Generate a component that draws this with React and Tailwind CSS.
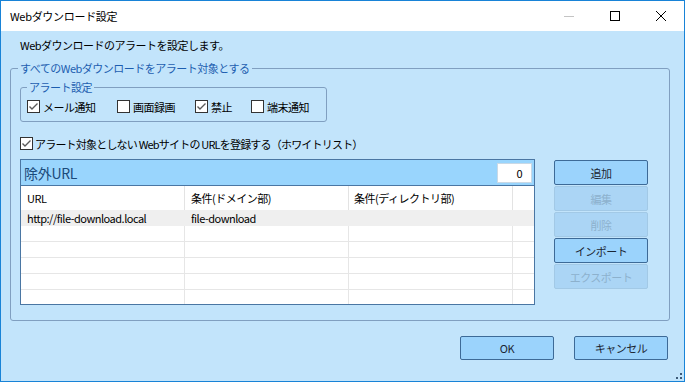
import React from "react";

function Check({ checked }) {
  return (
    <span className="w-[13px] h-[13px] border border-[#333333] bg-white flex items-center justify-center shrink-0">
      {checked && (
        <svg width="11" height="11" viewBox="0 0 11 11">
          <path d="M1.5 5.5 L4 8 L9.5 2.5" fill="none" stroke="#5a5a5a" strokeWidth="1.4" />
        </svg>
      )}
    </span>
  );
}

function CB({ checked, label, w }) {
  return (
    <div className={`flex items-center h-[13px] ${w}`}>
      <Check checked={checked} />
      <span className="ml-[3px] leading-[14px]">{label}</span>
    </div>
  );
}

function Btn({ children, disabled, cls }) {
  return (
    <div
      className={`w-[94px] flex items-center justify-center rounded-[2px] border text-[11px] leading-[14px] ${cls} ${
        disabled
          ? "bg-[#abd5f5] border-[#a2c9e6] text-[#8db1cd]"
          : "bg-[#9bd3fc] border-[#3d6a97] text-[#1b2633]"
      }`}
    >
      {children}
    </div>
  );
}

const rows = [
  ["http://file-download.local", "file-download", ""],
  ["", "", ""],
  ["", "", ""],
  ["", "", ""],
  ["", "", ""],
  ["", "", ""],
];

export default function App() {
  return (
    <div className="w-[685px] h-[382px] border border-[#1883d7] flex flex-col bg-[#c2e4fb] font-['Noto_Sans_CJK_JP',sans-serif] text-[11px] tracking-[-0.5px] text-black overflow-hidden relative">
      {/* title bar */}
      <div className="h-[30px] bg-white flex items-center shrink-0">
        <span className="pl-[9px] text-[11px] leading-[16px] tracking-[-0.3px] text-black">Webダウンロード設定</span>
        <div className="ml-auto flex h-full">
          <div className="w-[46px] h-full flex items-center justify-center">
            <div className="w-[10px] h-px bg-[#c4c4c4]" />
          </div>
          <div className="w-[46px] h-full flex items-center justify-center">
            <div className="w-[10px] h-[10px] border border-black" />
          </div>
          <div className="w-[46px] h-full flex items-center justify-center">
            <svg width="10" height="10" viewBox="0 0 10 10">
              <path d="M0 0 L10 10 M10 0 L0 10" stroke="#000" strokeWidth="1" />
            </svg>
          </div>
        </div>
      </div>

      {/* content */}
      <div className="flex-1 flex flex-col">
        <div className="pt-[7px] pl-[19px] leading-[14px]">Webダウンロードのアラートを設定します。</div>

        <fieldset className="mt-[9px] ml-[9px] w-[660px] border border-[#809fc0] rounded-[3px] pl-[7px] pb-[15px]">
          <legend className="px-[2px] leading-[14px] text-[#1d5eb0]">すべてのWebダウンロードをアラート対象とする</legend>
          <div className="pl-[2px]">
            <fieldset className="mt-[5px] w-[307px] border border-[#809fc0] rounded-[3px] pl-[6px] pb-[8px]">
              <legend className="px-[2px] leading-[14px] text-[#1d5eb0]">アラート設定</legend>
              <div className="mt-[6px] flex">
                <CB checked label="メール通知" w="w-[90px]" />
                <CB label="画面録画" w="w-[78px]" />
                <CB checked label="禁止" w="w-[56px]" />
                <CB label="端末通知" w="" />
              </div>
            </fieldset>

            <div className="mt-[15px] flex items-center h-[13px]">
              <Check checked />
              <span className="ml-[2px] leading-[14px] tracking-[-0.8px]">アラート対象としない Webサイトの URLを登録する（ホワイトリスト）</span>
            </div>

            <div className="mt-[9px] flex">
              <div className="w-[515px] h-[146px] border border-[#4a76a3] flex flex-col overflow-hidden">
                <div className="h-[26px] bg-[#99d5fd] border-b border-[#4a76a3] flex items-center shrink-0">
                  <span className="pl-[3px] text-[14px] leading-[18px] tracking-[-0.3px] text-[#1b4a7a]">除外URL</span>
                  <div className="ml-auto mr-[2px] w-[35px] h-[20px] bg-white border border-[#c9d9e6] flex items-center justify-end pr-[9px] text-[11px] leading-[14px]">
                    0
                  </div>
                </div>
                <div className="flex-1 bg-white flex flex-col">
                  <div className="h-[24px] flex shrink-0">
                    <div className="w-[164px] border-r border-[#e3e3e3] flex items-center pl-[6px]">URL</div>
                    <div className="w-[164px] border-r border-[#e3e3e3] flex items-center pl-[6px]">条件(ドメイン部)</div>
                    <div className="w-[164px] border-r border-[#e3e3e3] flex items-center pl-[5px]">条件(ディレクトリ部)</div>
                    <div className="flex-1" />
                  </div>
                  {rows.map((r, i) => (
                    <div
                      key={i}
                      className={`h-[16px] flex shrink-0 border-b ${i === 0 ? "bg-[#efefef] border-[#efefef]" : "border-[#e6e6e6]"}`}
                    >
                      <div className={`w-[164px] border-r ${i === 0 ? "border-[#efefef]" : "border-[#e6e6e6]"} flex items-center pl-[6px] leading-[14px]`}>{r[0]}</div>
                      <div className={`w-[164px] border-r ${i === 0 ? "border-[#efefef]" : "border-[#e6e6e6]"} flex items-center pl-[6px] leading-[14px]`}>{r[1]}</div>
                      <div className={`w-[164px] border-r ${i === 0 ? "border-[#efefef]" : "border-[#e6e6e6]"} flex items-center pl-[5px] leading-[14px]`}>{r[2]}</div>
                      <div className="flex-1" />
                    </div>
                  ))}
                </div>
              </div>
              <div className="ml-[19px] mt-[1px] flex flex-col gap-[1px]">
                <Btn cls="h-[25px]">追加</Btn>
                <Btn cls="h-[25px]" disabled>編集</Btn>
                <Btn cls="h-[25px]" disabled>削除</Btn>
                <Btn cls="h-[25px]">インポート</Btn>
                <Btn cls="h-[25px]" disabled>エクスポート</Btn>
              </div>
            </div>
          </div>
        </fieldset>

        <div className="mt-[15px] flex justify-end pr-[16px] gap-[20px]">
          <Btn cls="h-[24px]">OK</Btn>
          <Btn cls="h-[24px]">キャンセル</Btn>
        </div>
      </div>

      {/* resize grip */}
      <svg className="absolute right-[1px] bottom-[1px]" width="8" height="8" viewBox="0 0 8 8">
        <rect x="5" y="1" width="2" height="2" fill="#3d5a78" />
        <rect x="1" y="5" width="2" height="2" fill="#3d5a78" />
        <rect x="5" y="5" width="2" height="2" fill="#3d5a78" />
      </svg>
    </div>
  );
}
